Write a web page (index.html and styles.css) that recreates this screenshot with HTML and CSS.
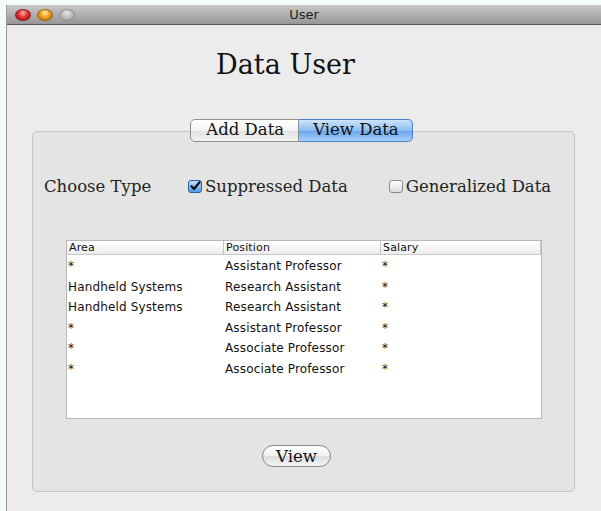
FILE: index.html
```html
<!DOCTYPE html>
<html>
<head>
<meta charset="utf-8">
<title>User</title>
<link rel="stylesheet" href="styles.css">
</head>
<body>
<div class="window">
  <div class="titlebar">
    <div class="lights">
      <span class="light red"></span>
      <span class="light orange"></span>
      <span class="light gray"></span>
    </div>
    <div class="wtitle">User</div>
  </div>
  <div class="content">
    <h1 class="heading">Data User</h1>
    <div class="panel-wrap">
      <div class="tabs">
        <span class="tab">Add Data</span>
        <span class="tab active">View Data</span>
      </div>
      <div class="panel">
        <div class="choose">
          <span class="choose-label">Choose Type</span>
          <label class="check"><span class="box on"><svg viewBox="0 0 12 12" width="12" height="12"><path d="M2.5 6.2 L5 9 L10.5 2.2" fill="none" stroke="#111" stroke-width="2.2" stroke-linecap="round" stroke-linejoin="round"/></svg></span>Suppressed Data</label>
          <label class="check"><span class="box"></span>Generalized Data</label>
        </div>
        <div class="table">
          <div class="thead">
            <span>Area</span><span>Position</span><span>Salary</span>
          </div>
          <div class="tbody">
            <div class="row"><span>*</span><span>Assistant Professor</span><span>*</span></div>
            <div class="row"><span>Handheld Systems</span><span>Research Assistant</span><span>*</span></div>
            <div class="row"><span>Handheld Systems</span><span>Research Assistant</span><span>*</span></div>
            <div class="row"><span>*</span><span>Assistant Professor</span><span>*</span></div>
            <div class="row"><span>*</span><span>Associate Professor</span><span>*</span></div>
            <div class="row"><span>*</span><span>Associate Professor</span><span>*</span></div>
          </div>
        </div>
        <div class="actions">
          <button class="btn">View</button>
        </div>
      </div>
    </div>
  </div>
</div>
</body>
</html>
```

FILE: styles.css
```css
html, body {
  margin: 0;
  padding: 0;
  background: #f4fbfb;
  height: 100%;
  overflow: hidden;
}

.window {
  margin: 5px 0 0 6px;
  border-left: 1px solid #9a9a9a;
  height: 506px;
  background: #ececec;
}

.titlebar {
  height: 19px;
  border-bottom: 1px solid #555;
  background: linear-gradient(#c9c9c9, #969696);
  position: relative;
  display: flex;
  align-items: center;
}

.lights {
  display: flex;
  gap: 6px;
  padding-left: 8px;
}

.light {
  width: 16px;
  height: 12px;
  border-radius: 50%;
  display: block;
  box-sizing: border-box;
}

.light.red {
  background: radial-gradient(ellipse at 50% 30%, #ffb0b0 0, #e43030 45%, #9e0a0a 100%);
  border: 1px solid #8a1a1a;
}

.light.orange {
  background: radial-gradient(ellipse at 50% 30%, #fff0a0 0, #f0a020 45%, #b06000 100%);
  border: 1px solid #9a6410;
}

.light.gray {
  background: radial-gradient(ellipse at 50% 30%, #e6e6e6 0, #bcbcbc 50%, #9a9a9a 100%);
  border: 1px solid #8e8e8e;
}

.wtitle {
  position: absolute;
  left: 0;
  right: 0;
  top: 2px;
  text-align: center;
  font: 13px "DejaVu Sans", sans-serif;
  color: #222;
}

.content {
  padding: 24px 26px 0 25px;
}

.heading {
  margin: 0;
  text-align: center;
  font: normal 27px "DejaVu Serif", serif;
  color: #111;
  height: 32px;
  line-height: 32px;
  padding-right: 36px;
}

.panel-wrap {
  margin-top: 50px;
  position: relative;
}

.tabs {
  position: absolute;
  top: -12px;
  left: 0;
  right: 0;
  display: flex;
  justify-content: center;
  padding-right: 4px;
}

.tab {
  height: 21px;
  line-height: 21px;
  font: 16.5px "DejaVu Serif", serif;
  padding: 0 14px 0 15px;
  border: 1px solid #8f8f8f;
  background: linear-gradient(#ffffff, #f3f3f3 50%, #e2e2e2 51%, #f2f2f2);
  color: #111;
}

.tab:first-child {
  border-radius: 5px 0 0 5px;
}

.tab.active {
  padding: 0 13px 0 14px;
  border-radius: 0 5px 5px 0;
  border-left: none;
  border-color: #4a82c8;
  background: linear-gradient(#cfe4fb, #8bbcf2 50%, #6aa4ea 51%, #a6d0fa);
}

.panel {
  height: 361px;
  border: 1px solid #c4c4c4;
  border-radius: 5px;
  background: #e4e4e4;
  box-sizing: border-box;
  padding: 44px 0 0 11px;
}

.choose {
  display: flex;
  align-items: center;
  font: 16.5px "DejaVu Serif", serif;
  color: #222;
  height: 20px;
}

.choose-label {
  width: 144px;
}

.check {
  display: flex;
  align-items: center;
  gap: 3px;
}

.check + .check {
  margin-left: 41px;
}

.box {
  width: 14px;
  height: 13px;
  border: 1px solid #888;
  border-radius: 3px;
  box-sizing: border-box;
  background: linear-gradient(#ffffff, #dcdcdc);
  display: flex;
  align-items: center;
  justify-content: center;
}

.box.on {
  border-color: #2c5c9c;
  background: linear-gradient(#bfe0ff, #4f9ae8);
}

.table {
  margin: 44px 0 0 22px;
  width: 476px;
  height: 179px;
  background: #fff;
  border: 1px solid #b8b8b8;
  box-sizing: border-box;
  font: 12px "DejaVu Sans", sans-serif;
  letter-spacing: 0.15px;
  color: #111;
}

.thead {
  display: grid;
  grid-template-columns: 157px 157px 1fr;
  height: 13px;
  border-bottom: 1px solid #c8c8c8;
  background: linear-gradient(#ffffff, #ededed);
  line-height: 13px;
  font-size: 11px;
}

.thead span {
  padding-left: 2px;
  border-right: 1px solid #c6c6c6;
}

.tbody {
  padding-top: 1px;
}

.row {
  display: grid;
  grid-template-columns: 157px 157px 1fr;
  height: 20.6px;
  line-height: 20px;
}

.row span {
  padding-left: 1px;
}

.actions {
  display: flex;
  justify-content: center;
  padding-top: 26px;
  padding-right: 25px;
}

.btn {
  font: 16.5px "DejaVu Serif", serif;
  color: #111;
  height: 22px;
  padding: 0 13px;
  border: 1px solid #888;
  border-radius: 11px;
  background: linear-gradient(#ffffff, #f0f0f0 50%, #dedede 51%, #f4f4f4);
  line-height: 19px;
}
```
